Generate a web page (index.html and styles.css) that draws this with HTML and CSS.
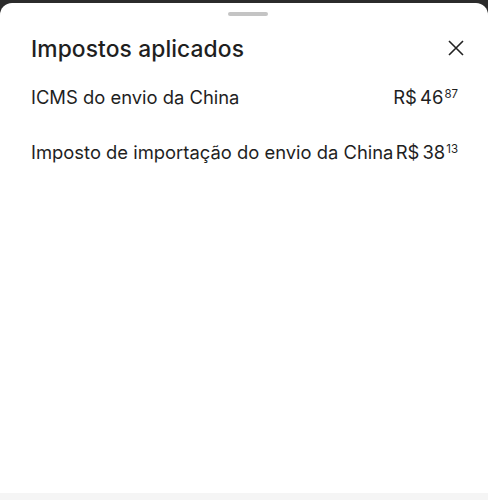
FILE: index.html
```html
<!DOCTYPE html>
<html lang="pt-BR">
<head>
    <meta charset="UTF-8">
    <meta name="viewport" content="width=device-width, initial-scale=1.0">
    <title>Impostos aplicados</title>
    <link rel="stylesheet" href="styles.css">
</head>
<body>
    <div class="sheet">
        <div class="handle"></div>
        <div class="header">
            <h1>Impostos aplicados</h1>
            <button class="close" aria-label="Fechar">
                <svg width="16" height="16" viewBox="0 0 16 16">
                    <path d="M1 1 L15 15 M15 1 L1 15" stroke="#222" stroke-width="1.6" fill="none"/>
                </svg>
            </button>
        </div>
        <div class="row">
            <span class="label">ICMS do envio da China</span>
            <span class="price">R$ 46<sup>87</sup></span>
        </div>
        <div class="row">
            <span class="label">Imposto de importação do envio da China</span>
            <span class="price">R$ 38<sup>13</sup></span>
        </div>
    </div>
    <div class="footer"></div>
</body>
</html>
```

FILE: styles.css
```css
body {
    margin: 0;
    padding-top: 3px;
    background: #2b2b2b;
    font-family: "Inter", "Liberation Sans", sans-serif;
    color: #1f1f1f;
    height: 500px;
    overflow: hidden;
}

.sheet {
    background: #fff;
    border-radius: 12px 12px 0 0;
    height: 490px;
    padding: 0 24px 0 31px;
}

.handle {
    width: 40px;
    height: 4px;
    margin: 0 auto;
    position: relative;
    top: 9px;
    border-radius: 2px;
    background: #c4c4c4;
}

.header {
    display: flex;
    justify-content: space-between;
    align-items: center;
    padding-top: 26px;
    height: 30px;
}

h1 {
    margin: 0;
    font-size: 22.8px;
    font-weight: 500;
    letter-spacing: 0.1px;
}

.close {
    border: none;
    background: none;
    padding: 0;
    display: flex;
}

.row {
    display: flex;
    justify-content: space-between;
    margin-top: 23px;
    font-size: 18.4px;
}

.row + .row {
    margin-top: 33px;
}

.label {
    white-space: nowrap;
}

.price {
    white-space: nowrap;
    margin-right: 6px;
    word-spacing: -2px;
}

.price sup {
    font-size: 11.5px;
    vertical-align: 6px;
    margin-left: 1px;
}

.footer {
    height: 10px;
    background: #f5f5f5;
}
```
